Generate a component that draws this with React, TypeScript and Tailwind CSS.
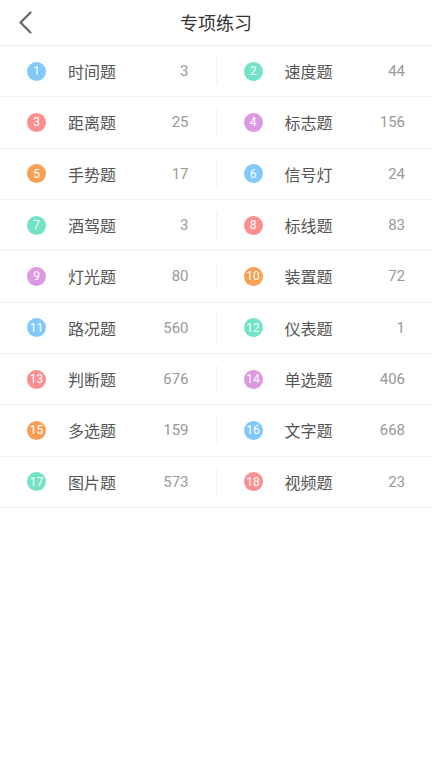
const items = [
  { no: 1, name: "时间题", count: 3, color: "bg-[#80c9fa]" },
  { no: 2, name: "速度题", count: 44, color: "bg-[#73e2c7]" },
  { no: 3, name: "距离题", count: 25, color: "bg-[#fa8f8f]" },
  { no: 4, name: "标志题", count: 156, color: "bg-[#dc98e0]" },
  { no: 5, name: "手势题", count: 17, color: "bg-[#f7a055]" },
  { no: 6, name: "信号灯", count: 24, color: "bg-[#80c9fa]" },
  { no: 7, name: "酒驾题", count: 3, color: "bg-[#73e2c7]" },
  { no: 8, name: "标线题", count: 83, color: "bg-[#fa8f8f]" },
  { no: 9, name: "灯光题", count: 80, color: "bg-[#dc98e0]" },
  { no: 10, name: "装置题", count: 72, color: "bg-[#f7a055]" },
  { no: 11, name: "路况题", count: 560, color: "bg-[#80c9fa]" },
  { no: 12, name: "仪表题", count: 1, color: "bg-[#73e2c7]" },
  { no: 13, name: "判断题", count: 676, color: "bg-[#fa8f8f]" },
  { no: 14, name: "单选题", count: 406, color: "bg-[#dc98e0]" },
  { no: 15, name: "多选题", count: 159, color: "bg-[#f7a055]" },
  { no: 16, name: "文字题", count: 668, color: "bg-[#80c9fa]" },
  { no: 17, name: "图片题", count: 573, color: "bg-[#73e2c7]" },
  { no: 18, name: "视频题", count: 23, color: "bg-[#fa8f8f]" },
];

type Item = (typeof items)[number];

const Cell = ({ item }: { item: Item }) => (
  <div className="flex flex-1 items-center pl-[27px] pr-[27px]">
    <span
      className={`flex h-[19px] w-[19px] items-center justify-center rounded-full text-[12px] leading-none text-white ${item.color}`}
      style={{ fontFamily: "Roboto, sans-serif" }}
    >
      {item.no}
    </span>
    <span className="ml-[22px] text-[16px] text-[#555]">{item.name}</span>
    <span
      className="ml-auto text-[15px] text-[#999]"
      style={{ fontFamily: "Roboto, sans-serif" }}
    >
      {item.count}
    </span>
  </div>
);

export default function App() {
  const rows: Item[][] = [];
  for (let i = 0; i < items.length; i += 2) rows.push(items.slice(i, i + 2));

  return (
    <div
      className="min-h-[768px] w-[432px] bg-white"
      style={{ fontFamily: '"Noto Sans CJK SC", "Noto Sans", sans-serif' }}
    >
      <header className="relative flex h-[46px] items-center justify-center border-b border-[#ececec]">
        <button className="absolute left-[18px] top-[11px]">
          <svg width="14" height="23" viewBox="0 0 14 23" fill="none">
            <path
              d="M12.5 1.5 L2.5 11.5 L12.5 21.5"
              stroke="#666"
              strokeWidth="2.2"
              strokeLinecap="round"
              strokeLinejoin="round"
            />
          </svg>
        </button>
        <h1 className="text-[18px] text-[#333]">专项练习</h1>
      </header>
      <div>
        {rows.map((row) => (
          <div
            key={row[0].no}
            className="flex h-[51.33px] items-center border-b border-[#efefef]"
          >
            <Cell item={row[0]} />
            <div className="h-[28px] w-px bg-[#f2f2f2]" />
            <Cell item={row[1]} />
          </div>
        ))}
      </div>
    </div>
  );
}
